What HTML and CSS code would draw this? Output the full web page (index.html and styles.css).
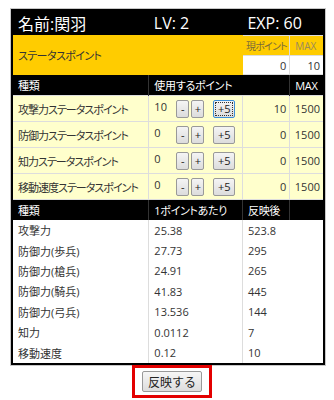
FILE: index.html
```html
<!DOCTYPE html>
<html lang="ja">
<head>
  <meta charset="UTF-8">
  <meta name="viewport" content="width=device-width, initial-scale=1.0">
  <title>ステータス</title>
  <link rel="stylesheet" href="styles.css">
</head>
<body>
  <table class="status">
    <colgroup>
      <col class="c1"><col class="c2"><col class="c3"><col class="c4">
    </colgroup>
    <tr class="top">
      <td>名前:関羽</td>
      <td>LV: 2</td>
      <td colspan="2">EXP: 60</td>
    </tr>
    <tr class="sp-head">
      <td class="sp-label" colspan="2" rowspan="2">ステータスポイント</td>
      <td class="sp-cap">現ポイント</td>
      <td class="sp-cap max">MAX</td>
    </tr>
    <tr class="sp-val">
      <td class="num">0</td>
      <td class="num">10</td>
    </tr>
    <tr class="head">
      <td>種類</td>
      <td colspan="2">使用するポイント</td>
      <td>MAX</td>
    </tr>
    <tr class="pt">
      <td>攻撃力ステータスポイント</td>
      <td><span class="use">10</span><button class="b">-</button><button class="b">+</button><button class="b b5 focus">+5</button></td>
      <td class="num">10</td>
      <td class="num">1500</td>
    </tr>
    <tr class="pt">
      <td>防御力ステータスポイント</td>
      <td><span class="use">0</span><button class="b">-</button><button class="b">+</button><button class="b b5">+5</button></td>
      <td class="num">0</td>
      <td class="num">1500</td>
    </tr>
    <tr class="pt">
      <td>知力ステータスポイント</td>
      <td><span class="use">0</span><button class="b">-</button><button class="b">+</button><button class="b b5">+5</button></td>
      <td class="num">0</td>
      <td class="num">1500</td>
    </tr>
    <tr class="pt">
      <td>移動速度ステータスポイント</td>
      <td><span class="use">0</span><button class="b">-</button><button class="b">+</button><button class="b b5">+5</button></td>
      <td class="num">0</td>
      <td class="num">1500</td>
    </tr>
    <tr class="head">
      <td>種類</td>
      <td>1ポイントあたり</td>
      <td>反映後</td>
      <td></td>
    </tr>
    <tr class="row"><td>攻撃力</td><td>25.38</td><td colspan="2">523.8</td></tr>
    <tr class="row"><td>防御力(歩兵)</td><td>27.73</td><td colspan="2">295</td></tr>
    <tr class="row"><td>防御力(槍兵)</td><td>24.91</td><td colspan="2">265</td></tr>
    <tr class="row"><td>防御力(騎兵)</td><td>41.83</td><td colspan="2">445</td></tr>
    <tr class="row"><td>防御力(弓兵)</td><td>13.536</td><td colspan="2">144</td></tr>
    <tr class="row"><td>知力</td><td>0.0112</td><td colspan="2">7</td></tr>
    <tr class="row"><td>移動速度</td><td>0.12</td><td colspan="2">10</td></tr>
  </table>
  <div class="apply">
    <span class="mark"><button class="apply-btn">反映する</button></span>
  </div>
</body>
</html>
```
FILE: styles.css
```css
body {
    margin: 0;
    padding: 8px 0 0 10px;
    font-family: "Open Sans", "Noto Sans CJK JP", sans-serif;
    font-size: 11px;
    color: #333;
    font-feature-settings: "palt";
}

.status {
    width: 314px;
    table-layout: fixed;
    border-collapse: collapse;
    border: 2px solid #000;
    box-shadow: 0 0 0 1px #c8c8c8;
    margin-left: 1px;
    margin-top: 1px;
}

.c1 { width: 136px; }
.c2 { width: 93px; }
.c3 { width: 47px; }
.c4 { width: 34px; }

td {
    padding: 0 0 0 5px;
    border: 1px solid #ddd;
    white-space: nowrap;
    overflow: hidden;
}

.num {
    text-align: right;
    padding: 0 3px 0 0;
}

.top td {
    background: #000;
    color: #fff;
    font-size: 16px;
    height: 24px;
    border: none;
}

.sp-label {
    background: #ffcc00;
    border-color: #ffcc00;
    height: 38px;
    letter-spacing: -0.6px;
}

.sp-cap {
    background: #ffcc00;
    color: #7a6a3a;
    height: 19px;
    font-size: 10px;
    letter-spacing: -0.8px;
    padding-left: 3px;
}

.sp-cap.max {
    color: #9a8a5a;
    letter-spacing: 0;
    padding-left: 5px;
}

.sp-val td {
    background: #fff;
    height: 18px;
}

.head td {
    background: #000;
    color: #fff;
    height: 20px;
    border-color: #333;
    border-top: none;
    border-bottom: none;
    letter-spacing: -0.3px;
}

.pt td {
    background: #ffffcc;
    height: 25px;
}

.pt td:first-child {
    letter-spacing: -1px;
}

.use {
    display: inline-block;
    width: 22px;
}

.b {
    font-family: "Open Sans", sans-serif;
    font-size: 11px;
    height: 18px;
    min-width: 13px;
    padding: 0 2px;
    margin: 0 2px 0 0;
    border: 1px solid #999;
    border-radius: 2px;
    background: linear-gradient(#f4f4f4, #dcdcdc);
    color: #222;
    line-height: 15px;
    vertical-align: middle;
}

.b5 {
    min-width: 22px;
    margin-left: 7px;
}

.focus {
    border-color: #3c8fd8;
    outline: 1px dotted #333;
    outline-offset: -3px;
}

.row td {
    background: #fff;
    height: 20.4px;
    border-top: none;
    border-bottom: none;
}

.apply {
    text-align: center;
    margin-top: 0;
}

.mark {
    display: inline-block;
    border: 3px solid #e30000;
    padding: 3px 7px;
}

.apply-btn {
    font-family: "Noto Sans CJK JP", sans-serif;
    font-size: 12px;
    padding: 0 5px;
    height: 21px;
    border: 1px solid #999;
    border-radius: 2px;
    background: linear-gradient(#f6f6f6, #dddddd);
    color: #222;
}
```
